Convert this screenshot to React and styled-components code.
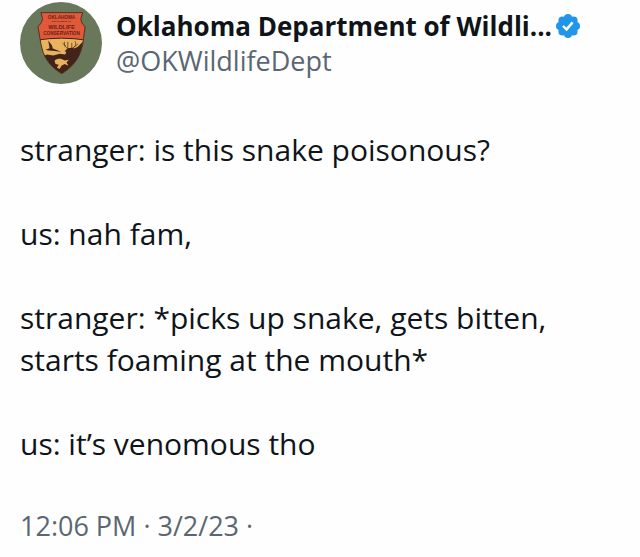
import React from 'react';
import styled, { createGlobalStyle } from 'styled-components';

const GlobalStyle = createGlobalStyle`
  *, *::before, *::after {
    box-sizing: border-box;
  }

  body {
    margin: 0;
    background: #fefefe;
    color: #0f1419;
    font-family: 'Open Sans', 'Noto Sans', sans-serif;
  }
`;

const StyledPost = styled.article`
  padding: 2px 20px 10px;
`;

const Header = styled.header`
  display: flex;
  align-items: flex-start;
  gap: 14px;
`;

const AvatarLink = styled.a`
  flex: none;
  display: block;
  width: 82px;
  height: 82px;
  border-radius: 50%;
  overflow: hidden;

  svg {
    display: block;
    width: 100%;
    height: 100%;
  }
`;

const Author = styled.div`
  min-width: 0;
  padding-top: 7px;
`;

const NameRow = styled.div`
  display: flex;
  align-items: center;
  gap: 4px;

  svg {
    flex: none;
    width: 24px;
    height: 24px;
  }
`;

const Name = styled.h1`
  margin: 0;
  font-size: 26px;
  font-weight: 700;
  line-height: 34px;
  white-space: nowrap;
`;

const Handle = styled.a`
  display: block;
  color: #5b6673;
  font-size: 27px;
  line-height: 36px;
  text-decoration: none;
`;

const Body = styled.div`
  margin-top: 45px;
  font-size: 30px;
  line-height: 42px;

  p {
    margin: 0 0 42px;
  }
`;

const Time = styled.time`
  display: block;
  color: #5b6673;
  font-size: 27px;
  line-height: 38px;
`;

const Emblem = () => (
  <svg viewBox="30 6 247 247" role="img" aria-label="Oklahoma Department of Wildlife Conservation">
    <defs>
      <clipPath id="shield">
        <path d="M93 38H219L213 56Q212 67 226 81C222 108 221 128 216 145C207 181 184 204 156 222C126 204 105 181 96 145C91 128 90 108 84 81Q98 67 98 56Z" />
      </clipPath>
    </defs>
    <rect x="30" y="6" width="247" height="247" fill="#69785a" />
    <g clipPath="url(#shield)">
      <rect x="80" y="30" width="150" height="195" fill="#e8b35c" />
      <path d="M80 30H230V121Q156 109 80 121Z" fill="#e2593a" />
      <path d="M96 170L112 164L130 167L150 162L166 164L170 156L176 148L190 148L205 140L225 120V225H90Z" fill="#41231a" />
      <path d="M134 183C143 174 155 176 164 182L177 180L170 188L176 198L164 193L155 198L149 208L141 203L147 195L137 193Z" fill="#e8b35c" />
      <path d="M80 121Q156 109 230 121" fill="none" stroke="#41231a" strokeWidth="3" />
    </g>
    <path d="M107 150L119 145L115 122L126 136L129 146L154 156L127 153L116 152Z" fill="#41231a" />
    <path d="M164 154L174 145L186 144L197 147L191 169H176L174 158Z" fill="#41231a" />
    <path d="M179 147C164 144 163 135 164 126M168 139L158 130M174 145V126M184 147C199 142 199 133 196 124M191 143L205 132M186 145V129" fill="none" stroke="#41231a" strokeWidth="2" />
    <path d="M93 38H219L213 56Q212 67 226 81C222 108 221 128 216 145C207 181 184 204 156 222C126 204 105 181 96 145C91 128 90 108 84 81Q98 67 98 56Z" fill="none" stroke="#512e20" strokeWidth="3" />
    <g
      fill="#642418"
      fontFamily="'Liberation Sans', sans-serif"
      fontWeight="700"
      textAnchor="middle"
    >
      <text x="155" y="56" fontSize="14">OKLAHOMA</text>
      <text x="155" y="66" fontSize="7">DEPARTMENT OF</text>
      <text x="155" y="86" fontSize="17">WILDLIFE</text>
      <text x="155" y="106" fontSize="14">CONSERVATION</text>
    </g>
  </svg>
);

const VerifiedBadge = () => (
  <svg viewBox="0 0 24 24" role="img" aria-label="Verified account">
    <g fill="#2196e8">
      <circle cx="12" cy="12" r="10" />
      <circle cx="12" cy="4" r="4" />
      <circle cx="17.6" cy="6.4" r="4" />
      <circle cx="20" cy="12" r="4" />
      <circle cx="17.6" cy="17.6" r="4" />
      <circle cx="12" cy="20" r="4" />
      <circle cx="6.4" cy="17.6" r="4" />
      <circle cx="4" cy="12" r="4" />
      <circle cx="6.4" cy="6.4" r="4" />
    </g>
    <path d="M7 12L10.6 15.4L16.6 8.4" fill="none" stroke="#fff" strokeWidth="2.4" />
  </svg>
);

const App = () => (
  <>
    <GlobalStyle />
    <StyledPost>
      <Header>
        <AvatarLink href="#profile">
          <Emblem />
        </AvatarLink>
        <Author>
          <NameRow>
            <Name>Oklahoma Department of Wildli...</Name>
            <VerifiedBadge />
          </NameRow>
          <Handle href="#profile">@OKWildlifeDept</Handle>
        </Author>
      </Header>
      <Body>
        <p>stranger: is this snake poisonous?</p>
        <p>us: nah fam,</p>
        <p>stranger: *picks up snake, gets bitten, starts foaming at the mouth*</p>
        <p>us: it’s venomous tho</p>
      </Body>
      <Time dateTime="2023-03-02T12:06">12:06 PM · 3/2/23 ·</Time>
    </StyledPost>
  </>
);

export default App;
